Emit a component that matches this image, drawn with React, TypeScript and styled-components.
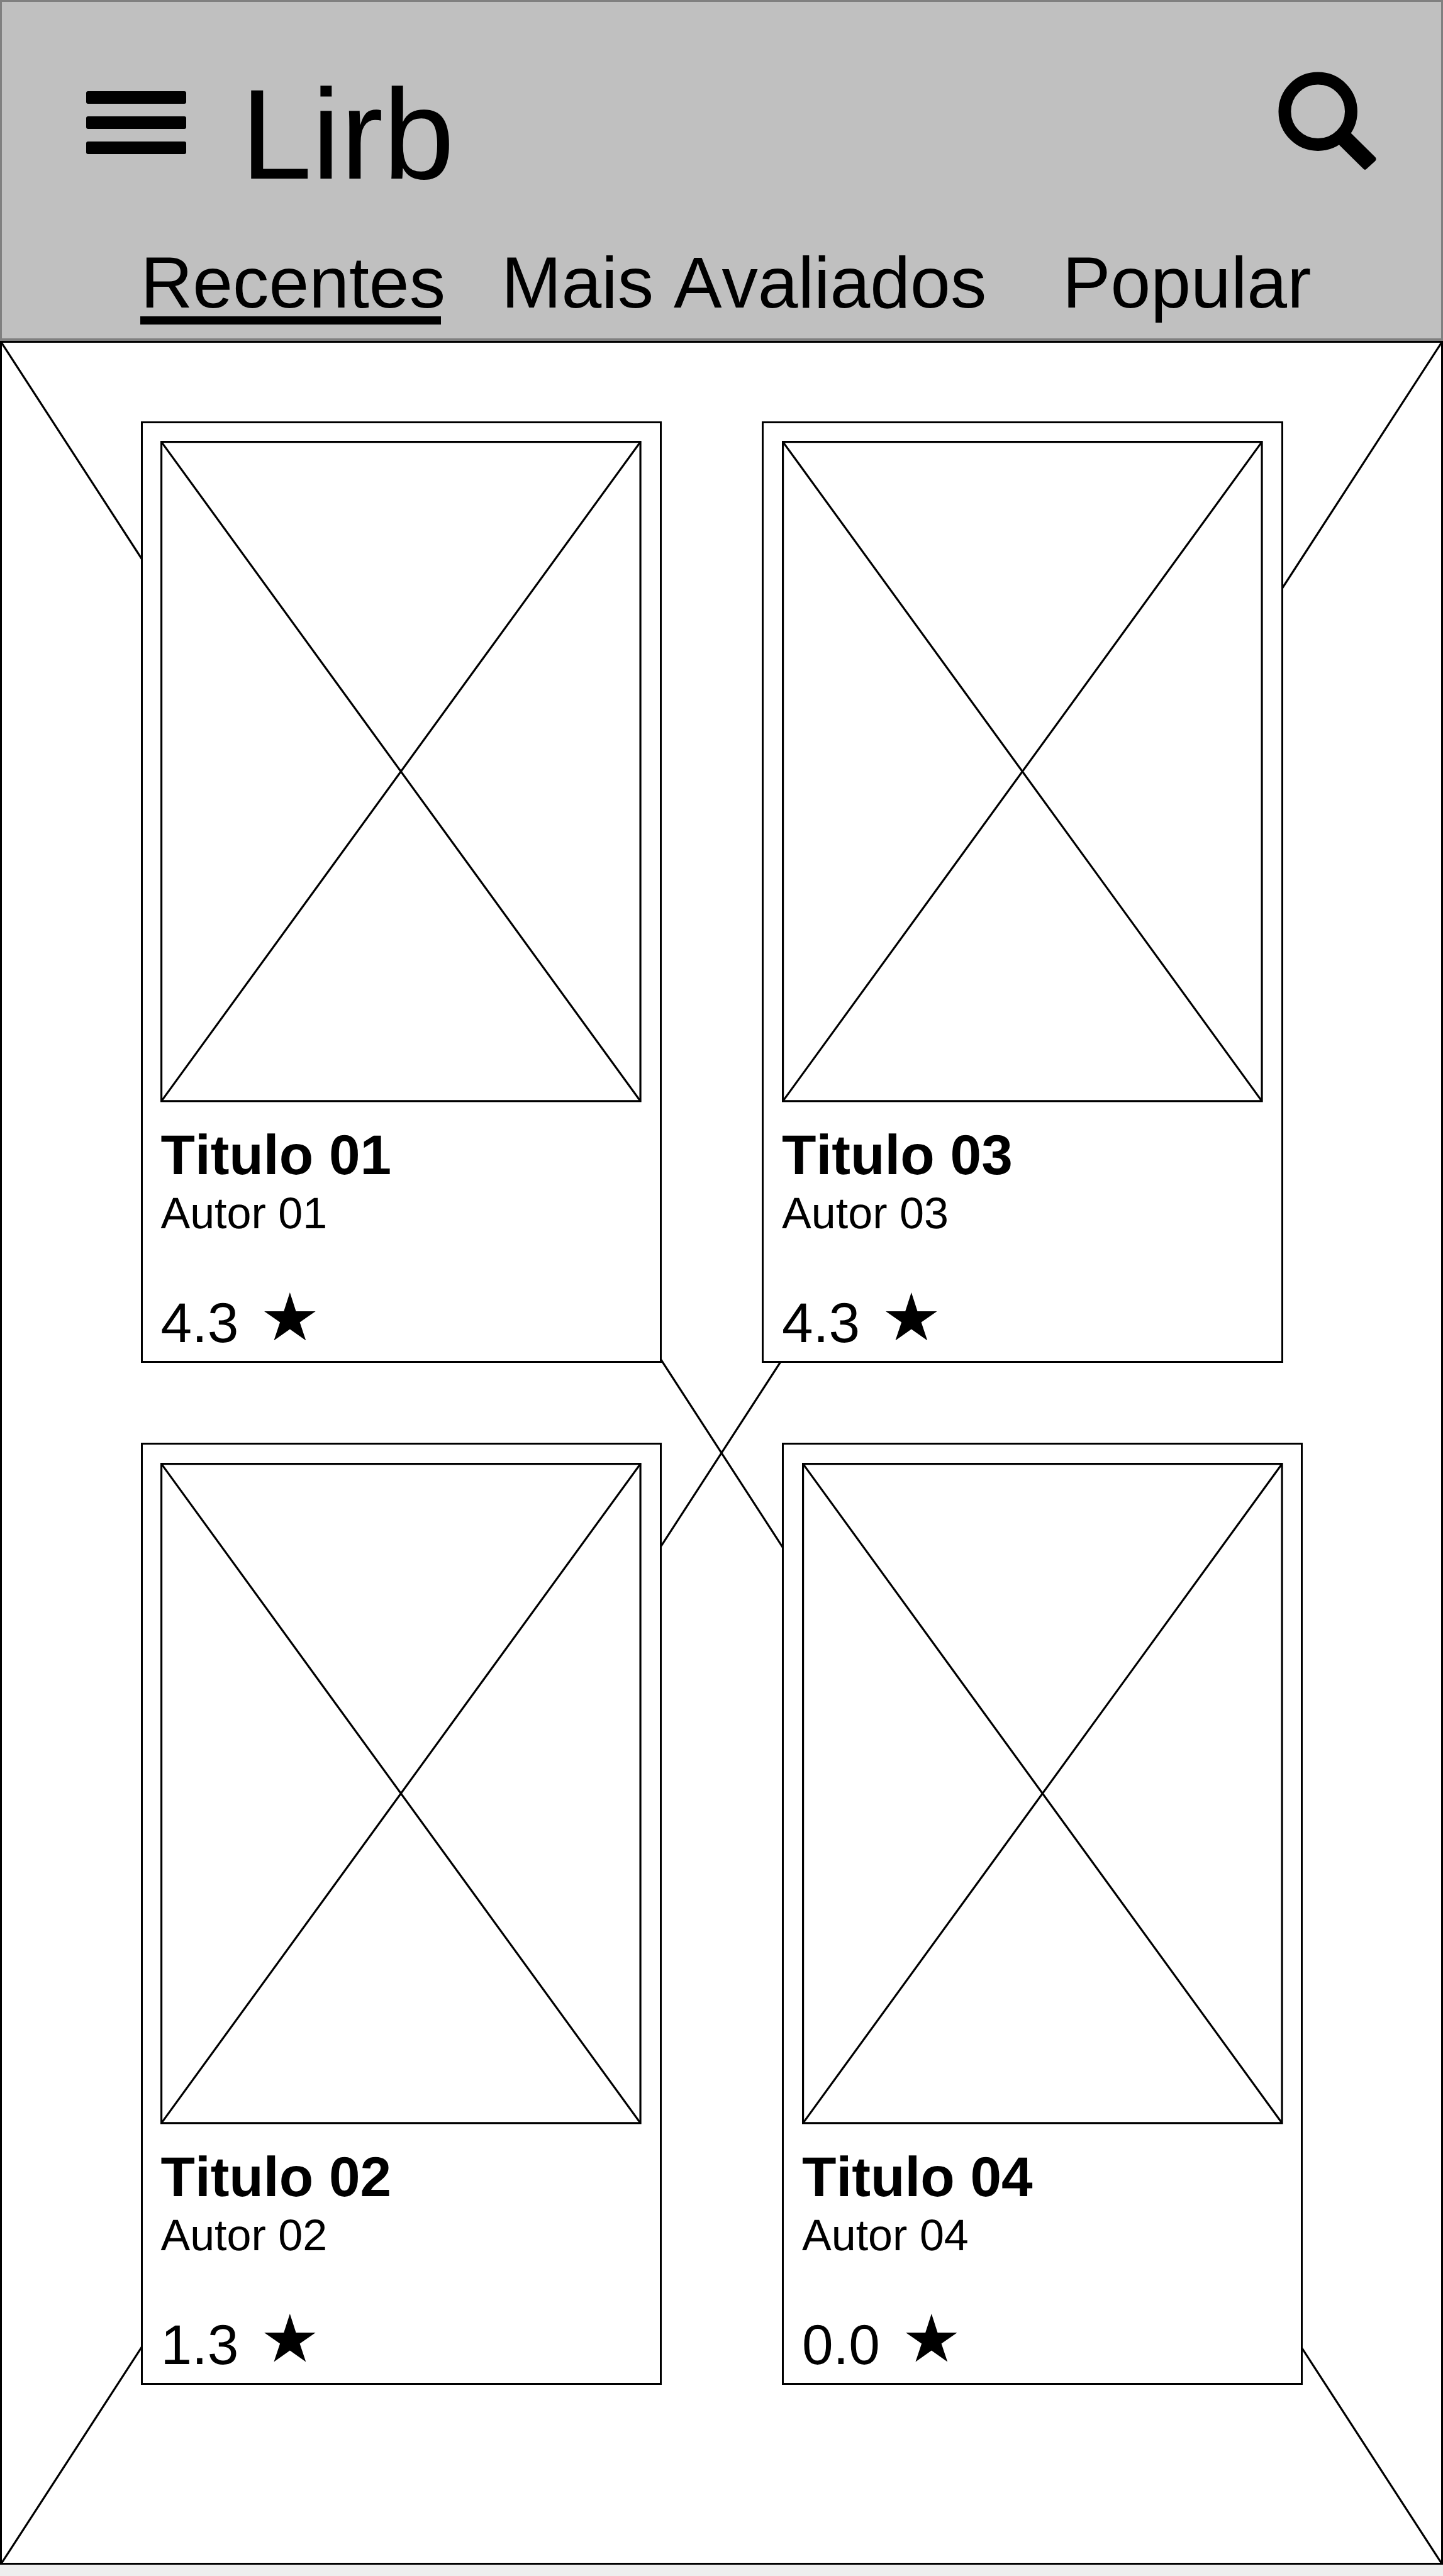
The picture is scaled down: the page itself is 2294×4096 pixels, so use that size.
import React from "react";
import styled, { createGlobalStyle } from "styled-components";

// The wireframe is laid out on a canvas 720 units wide.
const UNIT = 2294 / 720;
const u = (n: number) => `${(n * UNIT).toFixed(3)}px`;

const GlobalStyle = createGlobalStyle`
  *, *::before, *::after { box-sizing: border-box; }
  body {
    margin: 0;
    background: #eeeeee;
    color: #000;
    font-family: "Liberation Sans", Arial, Helvetica, sans-serif;
    font-kerning: none;
    text-rendering: geometricPrecision;
  }
  h1, h2, p { margin: 0; font-weight: normal; }
  button { margin: 0; padding: 0; border: 0; background: none; font: inherit; color: inherit; }
`;

const Screen = styled.div`
  display: flex;
  flex-direction: column;
  width: 100%;
  height: 4096px;
  overflow: hidden;
`;

const Header = styled.header`
  flex: none;
  height: ${u(170)};
  background: #c0c0c0;
  border: ${u(1)} solid #808080;
  border-bottom-width: 4px;
`;

const TopBar = styled.div`
  display: flex;
  align-items: flex-start;
  height: ${u(122)};
  padding: ${u(34.1)} ${u(32)} 0 ${u(42.1)};
`;

const MenuButton = styled.button`
  display: flex;
  flex-direction: column;
  gap: ${u(6.2)};
  width: ${u(50)};
  margin-top: ${u(10.6)};
`;

const MenuBar = styled.span`
  height: ${u(6.25)};
  border-radius: 3px;
  background: #000;
`;

const Brand = styled.h1`
  margin-top: 1px;
  margin-left: ${u(27)};
  font-size: ${u(64)};
  line-height: 1;
`;

const SearchButton = styled.button`
  width: ${u(50)};
  height: ${u(50)};
  margin-left: auto;
`;

const SearchDrawing = styled.svg`
  display: block;
  width: 100%;
  height: 100%;
`;

const Tabs = styled.nav`
  display: flex;
  gap: ${u(30)};
  padding-left: ${u(69.2)};
`;

const Tab = styled.button<{ $width: number; $active?: boolean }>`
  width: ${(p) => u(p.$width)};
  height: ${u(39)};
  border-bottom: ${u(4.2)} solid ${(p) => (p.$active ? "#000" : "transparent")};
  font-size: ${u(36)};
  line-height: ${u(36)};
  text-align: left;
  white-space: nowrap;
  display: flex;
  align-items: flex-start;
`;

const Shelf = styled.main`
  position: relative;
  flex: none;
  height: ${u(1110)};
  padding: ${u(39.2)} 0 0 ${u(69.22)};
  background: #fff;
  border: ${u(1)} solid #000;
  display: flex;
  flex-direction: column;
  gap: ${u(40)};
`;

const Backdrop = styled.svg`
  position: absolute;
  inset: -3px;
  width: calc(100% + 6px);
  height: calc(100% + 6px);
`;

const ShelfRow = styled.div<{ $gap: number }>`
  position: relative;
  display: flex;
  gap: ${(p) => u(p.$gap)};
`;

const BookCard = styled.article`
  width: ${u(260)};
  height: ${u(470)};
  padding: ${u(9.06)};
  background: #fff;
  border: ${u(1)} solid #000;
`;

const Cover = styled.svg`
  display: block;
  width: ${u(240)};
  height: ${u(330)};
`;

const BookTitle = styled.h2`
  margin-top: ${u(12.2)};
  font-size: ${u(28)};
  font-weight: bold;
  line-height: 1;
`;

const Author = styled.p`
  margin-top: ${u(4.1)};
  font-size: ${u(22)};
  line-height: 1;
`;

const Rating = styled.div`
  display: flex;
  align-items: flex-start;
  gap: ${u(12.76)};
  margin-top: ${u(28.4)};
`;

const Score = styled.span`
  margin-top: ${u(1.3)};
  font-size: ${u(28)};
  line-height: 1;
`;

const StarDrawing = styled.svg`
  width: ${u(25.65)};
  height: ${u(24)};
`;

function SearchIcon() {
  return (
    <SearchDrawing viewBox="2707.25 148.75 212.5 212.5" aria-hidden="true">
      <circle cx="2794.2" cy="235.8" r="70.4" fill="none" stroke="#000" strokeWidth="26.5" />
      <path d="M2864 281.5 L2914 331 Q2920.5 336.5 2915 341.5 L2897 358 Q2894 361 2891 358 L2839 306.5 L2830 290 L2848 272 Z" />
    </SearchDrawing>
  );
}

function StarIcon() {
  return (
    <StarDrawing viewBox="0 0 109 102" aria-hidden="true">
      <path d="M54.5 0 L67.4 40 H109 L75.5 63.4 L88.4 102 L54.5 78 L20.6 102 L33.5 63.4 L0 40 H41.6 Z" />
    </StarDrawing>
  );
}

type Book = { title: string; author: string; score: string };

const rows: { gap: number; books: Book[] }[] = [
  {
    gap: 50,
    books: [
      { title: "Titulo 01", author: "Autor 01", score: "4.3" },
      { title: "Titulo 03", author: "Autor 03", score: "4.3" },
    ],
  },
  {
    gap: 60,
    books: [
      { title: "Titulo 02", author: "Autor 02", score: "1.3" },
      { title: "Titulo 04", author: "Autor 04", score: "0.0" },
    ],
  },
];

function BookItem({ title, author, score }: Book) {
  return (
    <BookCard>
      <Cover viewBox="0 0 240 330" preserveAspectRatio="none" fill="none" stroke="#000" aria-hidden="true">
        <rect x="0.5" y="0.5" width="239" height="329" />
        <path d="M0.5 0.5 L239.5 329.5 M239.5 0.5 L0.5 329.5" />
      </Cover>
      <BookTitle>{title}</BookTitle>
      <Author>{author}</Author>
      <Rating>
        <Score>{score}</Score>
        <StarIcon />
      </Rating>
    </BookCard>
  );
}

export default function App() {
  return (
    <>
      <GlobalStyle />
      <Screen>
        <Header>
          <TopBar>
            <MenuButton aria-label="Menu">
              <MenuBar />
              <MenuBar />
              <MenuBar />
            </MenuButton>
            <Brand>Lirb</Brand>
            <SearchButton aria-label="Buscar">
              <SearchIcon />
            </SearchButton>
          </TopBar>
          <Tabs>
            <Tab $width={150} $active>
              Recentes
            </Tab>
            <Tab $width={250}>Mais Avaliados</Tab>
            <Tab $width={130}>Popular</Tab>
          </Tabs>
        </Header>
        <Shelf>
          <Backdrop viewBox="0 0 720 1110" preserveAspectRatio="none" stroke="#000" aria-hidden="true">
            <path d="M0.5 0.5 L719.5 1109.5 M719.5 0.5 L0.5 1109.5" />
          </Backdrop>
          {rows.map((row) => (
            <ShelfRow key={row.gap} $gap={row.gap}>
              {row.books.map((book) => (
                <BookItem key={book.title} {...book} />
              ))}
            </ShelfRow>
          ))}
        </Shelf>
      </Screen>
    </>
  );
}
